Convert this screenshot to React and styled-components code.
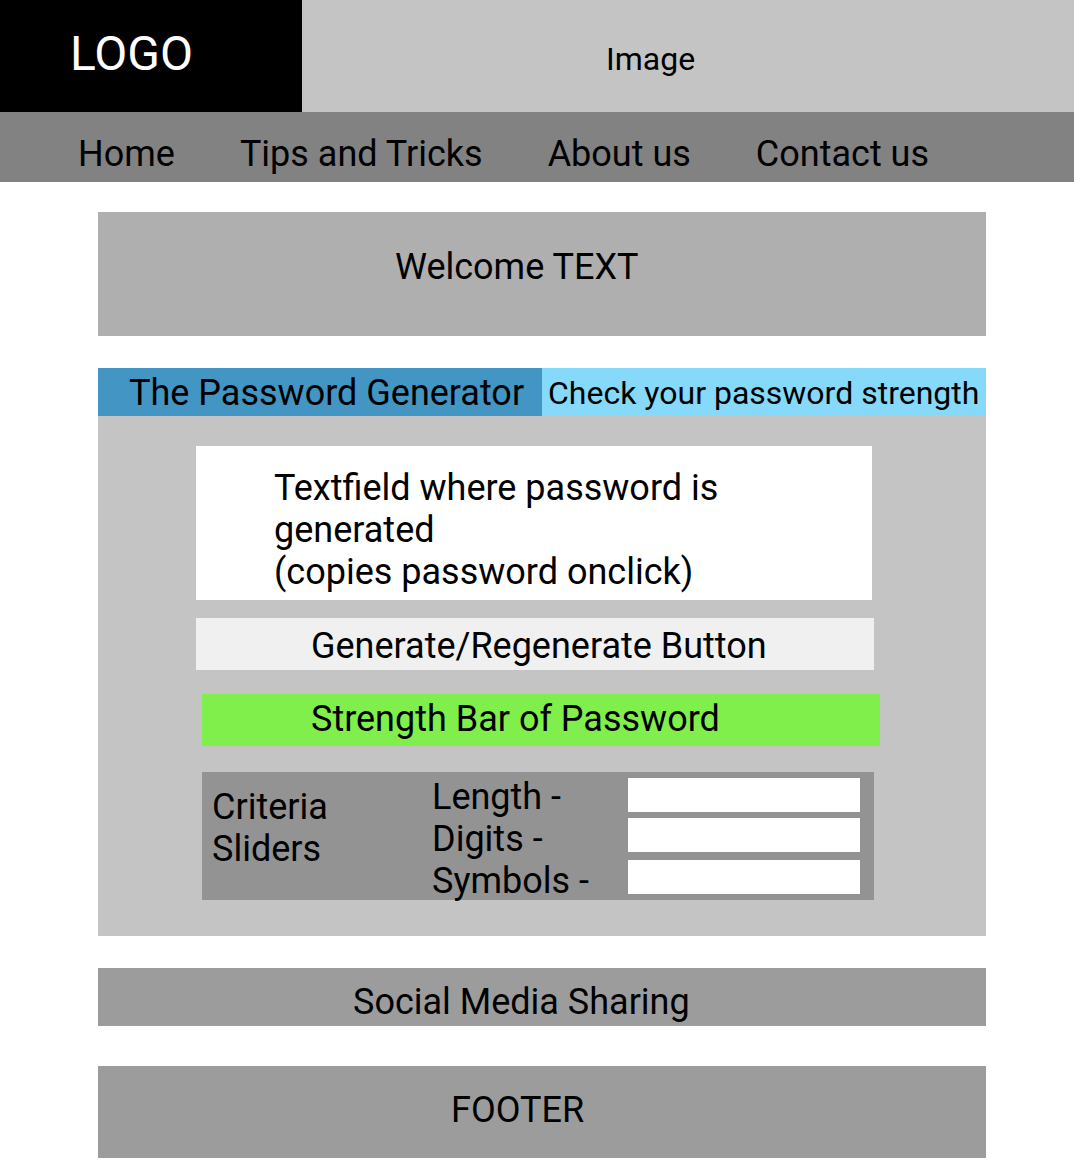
import React from "react";
import styled, { createGlobalStyle } from "styled-components";

const GlobalStyle = createGlobalStyle`
  body {
    margin: 0;
    background: #FFFFFF;
    font-family: Roboto, "Liberation Sans", sans-serif;
    color: #000000;
  }
`;

const Page = styled.div`
  width: 1074px;
  padding-bottom: 16px;
`;

// Header
const Header = styled.header`
  display: flex;
  height: 112px;
`;

const LogoBox = styled.div`
  width: 302px;
  background: #000000;
  color: #FFFFFF;
  font-size: 48px;
  line-height: 108px;
  padding-left: 70px;
  box-sizing: border-box;
`;

const ImageBox = styled.div`
  flex: 1;
  background: #C4C4C4;
  font-size: 32px;
  line-height: 118px;
  padding-left: 304px;
`;

const Nav = styled.nav`
  display: flex;
  gap: 65px;
  height: 70px;
  padding-left: 78px;
  background: #828282;
  box-sizing: border-box;
`;

const NavItem = styled.div`
  font-size: 36px;
  line-height: 56px;
  padding-top: 14px;
`;

// Content
const Main = styled.main`
  display: flex;
  flex-direction: column;
  margin-left: 98px;
  width: 888px;
  padding-top: 30px;
`;

const Block = styled.section`
  height: ${(p) => p.h}px;
  margin-top: ${(p) => p.top || 0}px;
  background: ${(p) => p.bg || "#9C9C9C"};
  font-size: 36px;
  line-height: ${(p) => p.lh || p.h}px;
  padding-left: ${(p) => p.left}px;
  box-sizing: border-box;
`;

const Tabs = styled.div`
  display: flex;
  height: 48px;
  margin-top: 32px;
`;

const Tab = styled.div`
  width: 50%;
  box-sizing: border-box;
  background: ${(p) => (p.active ? "#4396C4" : "#87D9FA")};
  font-size: ${(p) => p.size}px;
  line-height: 50px;
  padding-left: ${(p) => p.left}px;
  white-space: nowrap;
`;

const Panel = styled.div`
  display: flex;
  flex-direction: column;
  height: 520px;
  background: #C4C4C4;
  padding-top: 30px;
  box-sizing: border-box;
`;

const TextField = styled.div`
  margin-left: 98px;
  width: 676px;
  height: 154px;
  background: #FFFFFF;
  padding: 21px 0 0 78px;
  box-sizing: border-box;
  font-size: 36px;
  line-height: 42px;
`;

const Bar = styled.div`
  margin-left: ${(p) => p.x}px;
  margin-top: ${(p) => p.top}px;
  width: 678px;
  height: 52px;
  background: ${(p) => p.bg};
  font-size: 36px;
  line-height: ${(p) => p.lh}px;
  padding-left: ${(p) => p.left}px;
  box-sizing: border-box;
`;

const Criteria = styled.div`
  display: flex;
  margin-left: 104px;
  margin-top: 26px;
  width: 672px;
  height: 128px;
  background: #939393;
  box-sizing: border-box;
  font-size: 36px;
  line-height: 42px;
`;

const CriteriaTitle = styled.div`
  width: 230px;
  padding: 14px 0 0 10px;
  box-sizing: border-box;
`;

const Labels = styled.div`
  width: 196px;
  padding-top: 4px;
`;

const Inputs = styled.div`
  display: flex;
  flex-direction: column;
  gap: 6px;
  padding-top: 6px;
`;

const SliderField = styled.div`
  width: 232px;
  height: 34px;
  background: #FFFFFF;
  &:nth-child(3) {
    margin-top: 2px;
  }
`;

const App = () => {
  const links = ["Home", "Tips and Tricks", "About us", "Contact us"];
  const sliders = ["Length -", "Digits -", "Symbols -"];

  return (
    <Page>
      <GlobalStyle />
      <Header>
        <LogoBox>LOGO</LogoBox>
        <ImageBox>Image</ImageBox>
      </Header>
      <Nav>
        {links.map((l) => (
          <NavItem key={l}>{l}</NavItem>
        ))}
      </Nav>

      <Main>
        <Block h={124} lh={110} left={297} bg="#AFAFAF">Welcome TEXT</Block>

        <Tabs>
          <Tab active size={36} left={31}>The Password Generator</Tab>
          <Tab size={32} left={6}>Check your password strength</Tab>
        </Tabs>
        <Panel>
          <TextField>
            Textfield where password is<br />
            generated<br />
            (copies password onclick)
          </TextField>
          <Bar x={98} top={18} lh={56} bg="#F0F0F0" left={115}>Generate/Regenerate Button</Bar>
          <Bar x={104} top={24} lh={50} bg="#80EF4C" left={109}>Strength Bar of Password</Bar>
          <Criteria>
            <CriteriaTitle>
              Criteria<br />Sliders
            </CriteriaTitle>
            <Labels>
              {sliders.map((s) => (
                <div key={s}>{s}</div>
              ))}
            </Labels>
            <Inputs>
              {sliders.map((s) => (
                <SliderField key={s} />
              ))}
            </Inputs>
          </Criteria>
        </Panel>

        <Block h={58} top={32} lh={68} left={255}>Social Media Sharing</Block>
        <Block h={92} top={40} lh={88} left={353}>FOOTER</Block>
      </Main>
    </Page>
  );
};

export default App;
